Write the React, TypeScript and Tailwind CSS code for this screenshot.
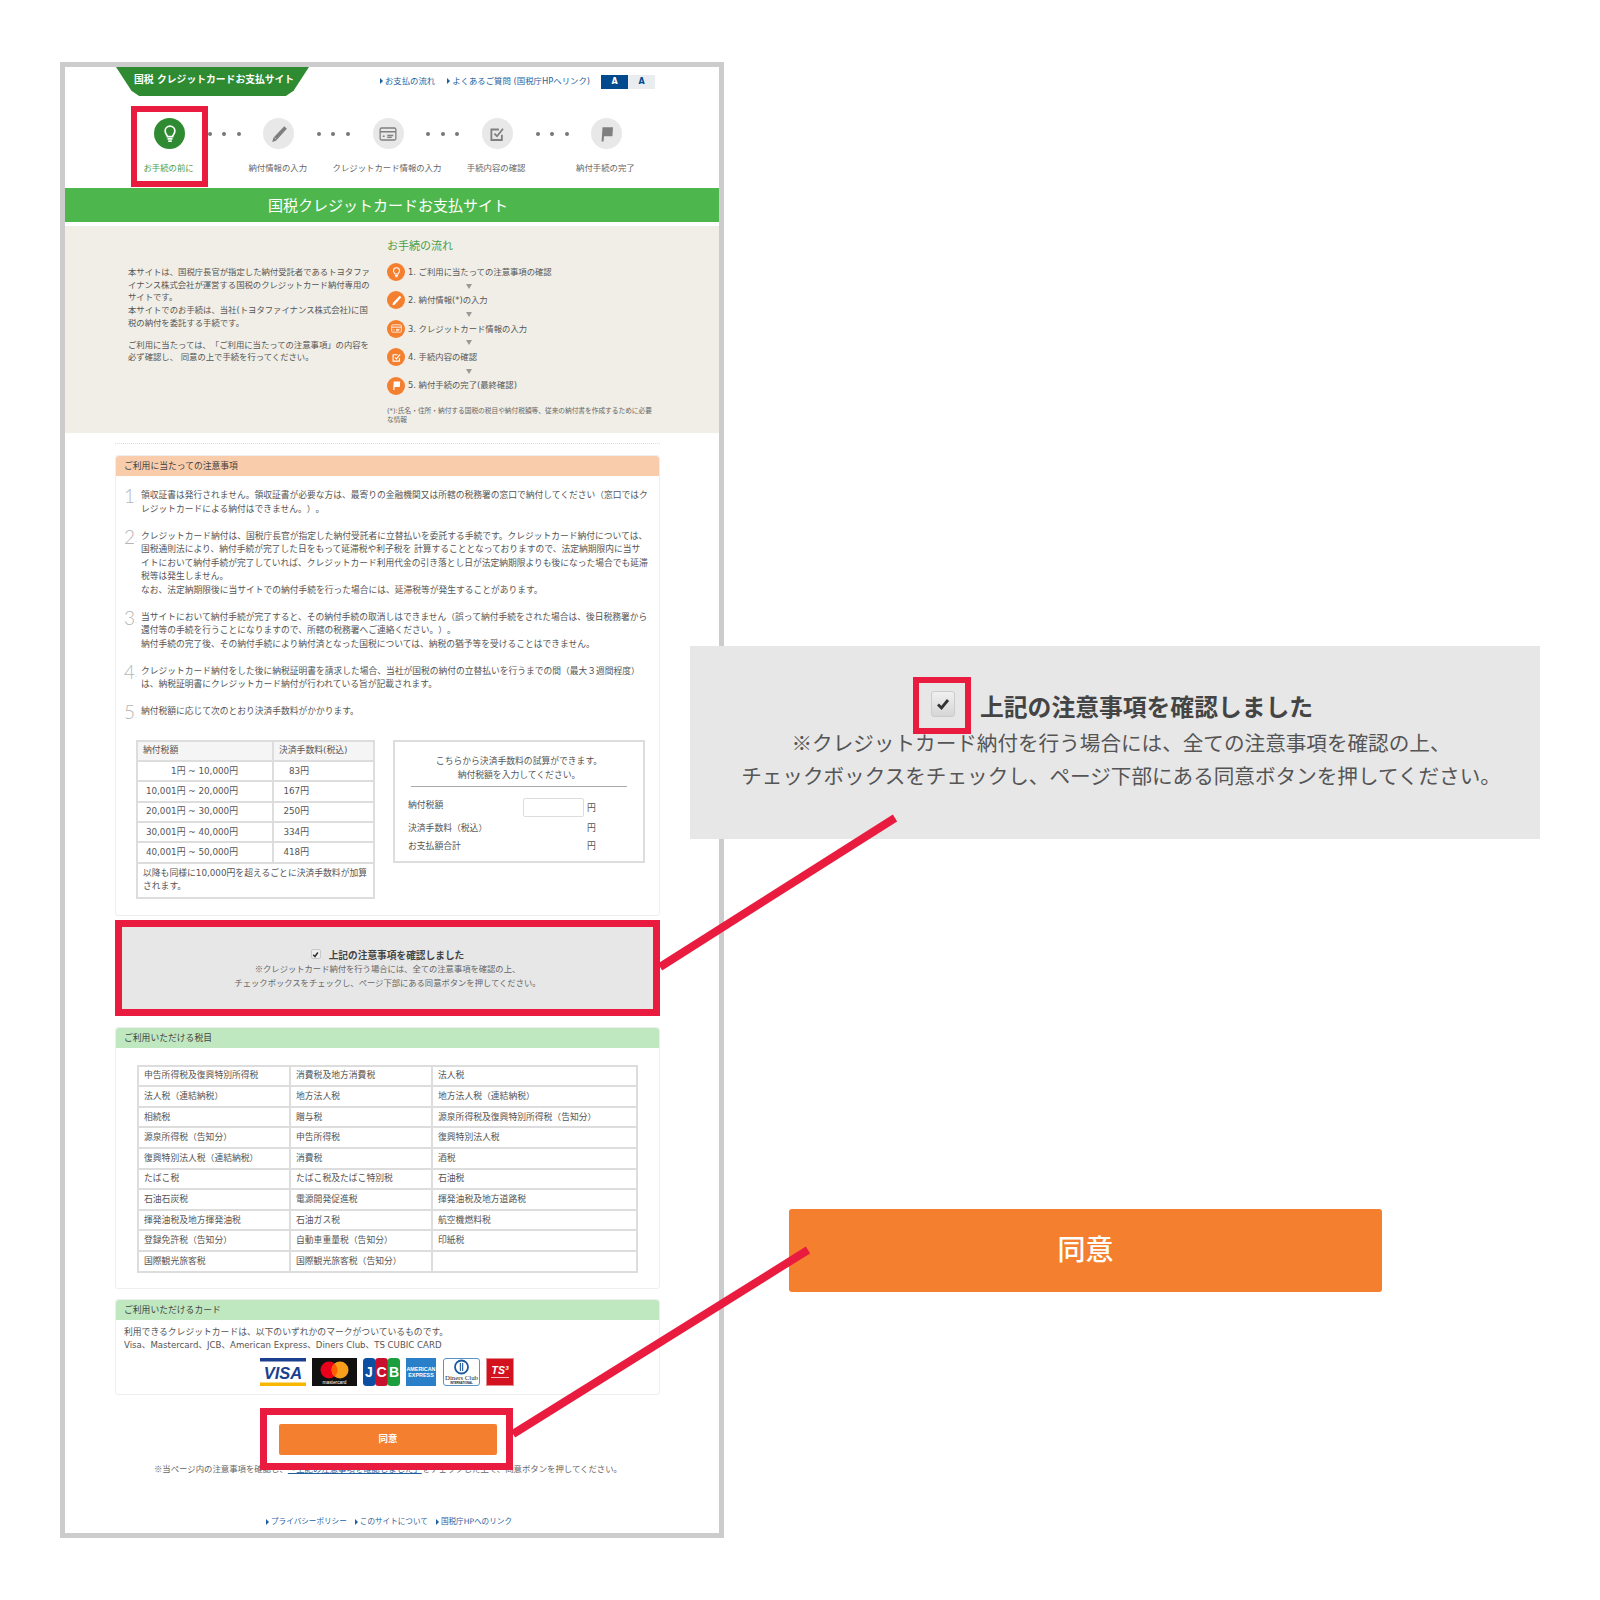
import { ReactNode } from 'react';

const fees = [
  ['1円 ~ 10,000円', '83円'],
  ['10,001円 ~ 20,000円', '167円'],
  ['20,001円 ~ 30,000円', '250円'],
  ['30,001円 ~ 40,000円', '334円'],
  ['40,001円 ~ 50,000円', '418円'],
];

const taxes = [
  ['申告所得税及復興特別所得税', '消費税及地方消費税', '法人税'],
  ['法人税（連結納税）', '地方法人税', '地方法人税（連結納税）'],
  ['相続税', '贈与税', '源泉所得税及復興特別所得税（告知分）'],
  ['源泉所得税（告知分）', '申告所得税', '復興特別法人税'],
  ['復興特別法人税（連結納税）', '消費税', '酒税'],
  ['たばこ税', 'たばこ税及たばこ特別税', '石油税'],
  ['石油石炭税', '電源開発促進税', '揮発油税及地方道路税'],
  ['揮発油税及地方揮発油税', '石油ガス税', '航空機燃料税'],
  ['登録免許税（告知分）', '自動車重量税（告知分）', '印紙税'],
  ['国際観光旅客税', '国際観光旅客税（告知分）', ''],
];

const flow = ['1. ご利用に当たっての注意事項の確認', '2. 納付情報(*)の入力', '3. クレジットカード情報の入力', '4. 手続内容の確認', '5. 納付手続の完了(最終確認)'];

const stepLabels = ['お手続の前に', '納付情報の入力', 'クレジットカード情報の入力', '手続内容の確認', '納付手続の完了'];

function Bulb({ size, color }: { size: number; color: string }) {
  return (
    <svg width={size} height={size} viewBox="0 0 24 24" fill="none" stroke={color} strokeWidth="2.2" strokeLinecap="round">
      <path d="M8.5 15.5c0-2-3-3.5-3-7.5a6.5 6.5 0 0 1 13 0c0 4-3 5.500-3 7.500z" />
      <path d="M9.500 18.500h5M10.500 21.500h3" />
    </svg>
  );
}

function PencilIcon({ size, color }: { size: number; color: string }) {
  return (
    <svg width={size} height={size} viewBox="0 0 24 24" fill={color}>
      <path d="M19 1.500l3.500 3.500L8 21l-5 1.500L4.500 17z" />
      <path d="M5.800 16.500l2.500 2.500" stroke="#e8e8e8" strokeWidth="0.8" />
    </svg>
  );
}

function CardIcon({ size, color }: { size: number; color: string }) {
  return (
    <svg width={size} height={size} viewBox="0 0 24 24" fill="none" stroke={color} strokeWidth="1.700">
      <rect x="1.500" y="4" width="21" height="16" rx="2" />
      <path d="M1.500 9h21" strokeWidth="2" />
      <path d="M5 15h2.500M11 14h8M11 16.500h6" />
    </svg>
  );
}

function CheckIcon({ size, color }: { size: number; color: string }) {
  return (
    <svg width={size} height={size} viewBox="0 0 24 24" fill="none" stroke={color} strokeWidth="2.400">
      <path d="M18.500 13v7h-14V6h10" />
      <path d="M8.500 11.500l3.500 3.500 8-10" />
    </svg>
  );
}

function FlagIcon({ size, color }: { size: number; color: string }) {
  return (
    <svg width={size} height={size} viewBox="0 0 24 24" fill={color}>
      <path d="M6 3h14l-.8 12H8l-.6 7H4.800z" />
    </svg>
  );
}

const icons = [Bulb, PencilIcon, CardIcon, CheckIcon, FlagIcon];

function Section({ title, color, children }: { title: string; color: string; children: ReactNode }) {
  return (
    <div className="mr-[59px] ml-[50px] rounded-[3px] border border-[#eeeeee]">
      <div className={`h-[20px] rounded-t-[3px] pl-2 text-[8.800px] leading-[20px] text-[#444] ${color}`}>{title}</div>
      {children}
    </div>
  );
}

function Note({ n, children }: { n: number; children: ReactNode }) {
  return (
    <li className="flex">
      <span className="flex h-[13.500px] w-[25px] shrink-0 items-end pl-[8px] font-['Lato',sans-serif] text-[19px] leading-[13.500px] font-light text-[#b5b5b5]">
        {n}
        <span className="text-[8px] leading-[8px]">.</span>
      </span>
      <div>{children}</div>
    </li>
  );
}

function NavLink({ children }: { children: ReactNode }) {
  return (
    <span className="flex items-center whitespace-nowrap">
      <span className="mr-[2px] h-0 w-0 border-y-[3px] border-l-[3px] border-y-transparent border-l-[#1f5f9e]" />
      {children}
    </span>
  );
}

// the reference mark needs the CJK face, DejaVu's one is narrow
function Mark() {
  return <span className="font-['Noto_Sans_CJK_JP',sans-serif]">※</span>;
}

function CardLogos() {
  return (
    <div className="mt-[5px] flex justify-center pr-[2px]">
      <svg width="46" height="28" viewBox="0 0 46 28" className="ml-[1px]">
        <rect width="46" height="28" fill="#fff" />
        <rect width="46" height="3.500" fill="#1a3f8f" />
        <rect y="24.500" width="46" height="3.500" fill="#f7b600" />
        <text x="23" y="20.500" textAnchor="middle" fontFamily="Liberation Sans" fontWeight="700" fontStyle="italic" fontSize="16.500" fill="#1a3f8f">VISA</text>
      </svg>
      <svg width="45" height="28" viewBox="0 0 45 28" className="ml-[6px]">
        <rect width="45" height="28" fill="#111" />
        <circle cx="17" cy="12" r="8.500" fill="#eb001b" />
        <circle cx="28" cy="12" r="8.500" fill="#f79e1b" />
        <path d="M22.500 5.500a8.500 8.500 0 0 1 0 13a8.500 8.500 0 0 1 0-13z" fill="#ff5f00" />
        <text x="22.500" y="25.500" textAnchor="middle" fontFamily="Liberation Sans" fontSize="4.800" fill="#fff">mastercard</text>
      </svg>
      <svg width="37" height="28" viewBox="0 0 37 28" className="ml-[6px]">
        <rect x="0" width="12.500" height="28" rx="3.500" fill="#0b4ea2" />
        <rect x="12" width="13" height="28" rx="3.500" fill="#c8102e" />
        <rect x="24.500" width="12.500" height="28" rx="3.500" fill="#1b9e3e" />
        <text x="6" y="19" textAnchor="middle" fontFamily="Liberation Sans" fontWeight="700" fontSize="14" fill="#fff">J</text>
        <text x="18.500" y="19" textAnchor="middle" fontFamily="Liberation Sans" fontWeight="700" fontSize="14" fill="#fff">C</text>
        <text x="31" y="19" textAnchor="middle" fontFamily="Liberation Sans" fontWeight="700" fontSize="14" fill="#fff">B</text>
      </svg>
      <svg width="30" height="28" viewBox="0 0 30 28" className="ml-[6px]">
        <rect width="30" height="28" fill="#2a7fc9" />
        <text x="15" y="12.500" textAnchor="middle" fontFamily="Liberation Sans" fontWeight="700" fontSize="5.400" fill="#fff">AMERICAN</text>
        <text x="15" y="19" textAnchor="middle" fontFamily="Liberation Sans" fontWeight="700" fontSize="5.400" fill="#fff">EXPRESS</text>
      </svg>
      <svg width="37" height="28" viewBox="0 0 37 28" className="ml-[7px]">
        <rect x="0.500" y="0.500" width="36" height="27" rx="2.500" fill="#fff" stroke="#5a93c8" />
        <circle cx="18.500" cy="9" r="6.500" fill="none" stroke="#1c5aa0" strokeWidth="1.800" />
        <rect x="16.800" y="5" width="1.100" height="8" fill="#1c5aa0" />
        <rect x="19.100" y="5" width="1.100" height="8" fill="#1c5aa0" />
        <text x="18.500" y="21.500" textAnchor="middle" fontFamily="Liberation Serif" fontSize="6.800" fill="#222">Diners Club</text>
        <text x="18.500" y="25.500" textAnchor="middle" fontFamily="Liberation Sans" fontWeight="700" fontSize="2.800" fill="#222">INTERNATIONAL</text>
      </svg>
      <svg width="28" height="28" viewBox="0 0 28 28" className="ml-[6px]">
        <rect x="0.500" y="0.500" width="27" height="27" fill="#d4111e" stroke="#e58a8f" />
        <text x="14" y="16" textAnchor="middle" fontFamily="Liberation Sans" fontWeight="700" fontStyle="italic" fontSize="10.500" fill="#fff">TS³</text>
        <rect x="5" y="19" width="18" height="1" fill="#f4b9bc" />
      </svg>
    </div>
  );
}

export default function App() {
  return (
    <div className="relative h-[1600px] w-[1600px] overflow-hidden bg-white pt-[62px] pl-[60px] font-['DejaVu_Sans','Noto_Sans_CJK_JP',sans-serif] text-[#555] [text-spacing-trim:space-all]">
      {/* left: the page itself */}
      <div className="h-[1476px] w-[664px] border-[5px] border-[#cccccc] bg-white">
        <div className="flex h-[29px]">
          <div className="ml-[51px] h-[29px] w-[193px] bg-[#2e8b31] pl-[18px] text-[9.800px] leading-[26px] font-bold text-white [clip-path:polygon(0_0,100%_0,92%_82%,88%_100%,12%_100%,8%_82%)]">
            国税 クレジットカードお支払サイト
          </div>
          <div className="ml-[71px] flex h-[14px] items-center gap-[12px] pt-[13px] text-[8.400px] leading-[14px] text-[#1f5f9e]">
            <NavLink>お支払の流れ</NavLink>
            <NavLink>よくあるご質問 (国税庁HPへリンク)</NavLink>
          </div>
        </div>
        <div className="relative">
          <div className="absolute top-[-21px] left-[536px] flex h-[14px] text-[8px] leading-[14px] font-bold">
            <span className="w-[27px] bg-[#004a8d] text-center text-white">A</span>
            <span className="w-[27px] bg-[#e9edf0] text-center text-[#004a8d]">A</span>
          </div>
        </div>

        <div className="mt-[22px] ml-[89px] flex items-center">
          {icons.map((Icon, i) => (
            <div key={i} className="flex items-center">
              <div className={`flex h-[31px] w-[31px] items-center justify-center rounded-full ${i === 0 ? 'bg-[#2e8b31]' : 'bg-[#e8e8e8]'}`}>
                <Icon size={18} color={i === 0 ? '#ffffff' : '#7f7f7f'} />
              </div>
              {i < 4 && (
                <div className="flex w-[78.300px] justify-center gap-[10.500px]">
                  <span className="h-[4px] w-[4px] rounded-full bg-[#777]" />
                  <span className="h-[4px] w-[4px] rounded-full bg-[#777]" />
                  <span className="h-[4px] w-[4px] rounded-full bg-[#777]" />
                </div>
              )}
            </div>
          ))}
        </div>
        <div className="mt-[13px] ml-[49px] flex text-[8.400px] leading-[12px]">
          {stepLabels.map((label, i) => (
            <div key={label} className={`w-[109.200px] text-center whitespace-nowrap ${i === 0 ? 'text-[#4a9e4a]' : 'text-[#666]'}`}>
              <span className="-mx-[20px] inline-block">{label}</span>
            </div>
          ))}
        </div>

        <div className="mt-[14px] h-[34px] bg-[#4db74d] pr-[8px] text-center text-[15px] leading-[36px] text-white">国税クレジットカードお支払サイト</div>

        <div className="mt-[4px] flex h-[207px] bg-[#f0eee6]">
          <div className="ml-[63px] w-[259px] pt-[40px] text-[8.350px] leading-[12.700px] text-[#555]">
            <p>
              本サイトは、国税庁長官が指定した納付受託者であるトヨタファ
              <br />
              イナンス株式会社が運営する国税のクレジットカード納付専用の
              <br />
              サイトです。
              <br />
              本サイトでのお手続は、当社(トヨタファイナンス株式会社)に国
              <br />
              税の納付を委託する手続です。
            </p>
            <p className="mt-[9px]">
              ご利用に当たっては、「ご利用に当たっての注意事項」の内容を
              <br />
              必ず確認し、 同意の上で手続を行ってください。
            </p>
          </div>
          <div className="w-[270px] pt-[14px]">
            <div className="h-[14px] text-[11px] leading-[14px] text-[#4a9e4a]">お手続の流れ</div>
            <div className="mt-[9px]">
              {flow.map((text, i) => {
                const Icon = icons[i];
                return (
                  <div key={text}>
                    <div className="flex h-[18px] items-center">
                      <div className="flex h-[18px] w-[18px] items-center justify-center rounded-full bg-[#f47f2e]">
                        <Icon size={11} color="#ffffff" />
                      </div>
                      <span className="ml-[3px] text-[8.350px] whitespace-nowrap text-[#555]">{text}</span>
                    </div>
                    {i < 4 && (
                      <div className="flex h-[10.400px] items-center pl-[78.500px]">
                        <span className="h-0 w-0 border-x-[3.500px] border-t-[5px] border-x-transparent border-t-[#999]" />
                      </div>
                    )}
                  </div>
                );
              })}
            </div>
            <p className="mt-[12px] text-[6.700px] leading-[9.500px] whitespace-nowrap text-[#666]">
              (*):氏名・住所・納付する国税の税目や納付税額等、従来の納付書を作成するために必要
              <br />
              な情報
            </p>
          </div>
        </div>

        <div className="mt-[10px] mr-[59px] mb-[11px] ml-[50px] border-t border-dotted border-[#dddddd]" />

        <Section title="ご利用に当たっての注意事項" color="bg-[#f9ccab]">
          <ol className="flex flex-col gap-[13.600px] pt-[13px] text-[8.750px] leading-[13.500px] whitespace-nowrap text-[#555]">
            <Note n={1}>
              領収証書は発行されません。領収証書が必要な方は、最寄りの金融機関又は所轄の税務署の窓口で納付してください（窓口ではク
              <br />
              レジットカードによる納付はできません。）。
            </Note>
            <Note n={2}>
              クレジットカード納付は、国税庁長官が指定した納付受託者に立替払いを委託する手続です。クレジットカード納付については、
              <br />
              国税通則法により、納付手続が完了した日をもって延滞税や利子税を 計算することとなっておりますので、法定納期限内に当サ
              <br />
              イトにおいて納付手続が完了していれば、クレジットカード利用代金の引き落とし日が法定納期限よりも後になった場合でも延滞
              <br />
              税等は発生しません。
              <br />
              なお、法定納期限後に当サイトでの納付手続を行った場合には、延滞税等が発生することがあります。
            </Note>
            <Note n={3}>
              当サイトにおいて納付手続が完了すると、その納付手続の取消しはできません（誤って納付手続をされた場合は、後日税務署から
              <br />
              還付等の手続を行うことになりますので、所轄の税務署へご連絡ください。）。
              <br />
              納付手続の完了後、その納付手続により納付済となった国税については、納税の猶予等を受けることはできません。
            </Note>
            <Note n={4}>
              クレジットカード納付をした後に納税証明書を請求した場合、当社が国税の納付の立替払いを行うまでの間（最大３週間程度）
              <br />
              は、納税証明書にクレジットカード納付が行われている旨が記載されます。
            </Note>
            <Note n={5}>納付税額に応じて次のとおり決済手数料がかかります。</Note>
          </ol>

          <div className="mt-[21px] ml-[20px] flex items-start pb-[16px] text-[8.800px] text-[#555]">
            <table className="w-[239px] table-fixed border-collapse border-2 border-[#dddddd]">
              <colgroup>
                <col className="w-[136px]" />
                <col />
              </colgroup>
              <thead>
                <tr className="h-[20.300px] bg-[#f5f5f5] text-left">
                  <th className="border-2 border-[#dddddd] pl-[5px] font-normal">納付税額</th>
                  <th className="border-2 border-[#dddddd] pl-[5px] font-normal">決済手数料(税込)</th>
                </tr>
              </thead>
              <tbody>
                {fees.map(([range, fee]) => (
                  <tr key={fee} className="h-[20.300px]">
                    <td className="border-2 border-[#dddddd] pr-[34px] text-right whitespace-nowrap">{range}</td>
                    <td className="border-2 border-[#dddddd] pr-[64px] text-right">{fee}</td>
                  </tr>
                ))}
                <tr className="h-[35px]">
                  <td colSpan={2} className="border-2 border-[#dddddd] pl-[5px] leading-[13.500px] whitespace-nowrap">
                    以降も同様に10,000円を超えるごとに決済手数料が加算
                    <br />
                    されます。
                  </td>
                </tr>
              </tbody>
            </table>
            <div className="ml-[18px] h-[123px] w-[252px] border-2 border-[#dddddd] pt-[12px] text-[8.800px] leading-[14px]">
              <p className="text-center whitespace-nowrap">
                こちらから決済手数料の試算ができます。
                <br />
                納付税額を入力してください。
              </p>
              <div className="mx-[16px] mt-[4px] border-t border-[#aaaaaa]" />
              <div className="mt-[11px] flex h-[19px] pl-[13px]">
                <span className="w-[115px] leading-[14px]">納付税額</span>
                <span className="h-[19px] w-[61px] rounded-[2px] border border-[#dddddd] bg-white" />
                <span className="ml-[3px] pt-[3px]">円</span>
              </div>
              <div className="mt-[4px] flex pl-[13px]">
                <span className="w-[179px]">決済手数料（税込）</span>
                <span>円</span>
              </div>
              <div className="mt-[4px] flex pl-[13px]">
                <span className="w-[179px]">お支払額合計</span>
                <span>円</span>
              </div>
            </div>
          </div>
        </Section>

        <div className="mt-[4px] mr-[59px] ml-[50px] h-[96px] border-[7px] border-[#e91c3f] bg-[#e7e7e7] pt-[22px] text-center">
          <div className="flex h-[14px] items-center justify-center">
            <span className="mb-[3px] flex h-[10px] w-[10px] items-center justify-center rounded-[2px] border border-[#c8c8c8] bg-[#eeeeee]">
              <svg width="7" height="7" viewBox="0 0 12 12" fill="none" stroke="#333" strokeWidth="2.600">
                <path d="M2 6.500l3 3L10 2.500" />
              </svg>
            </span>
            <span className="ml-[8px] text-[9.700px] leading-[14px] font-bold text-[#444]">上記の注意事項を確認しました</span>
          </div>
          <p className="-mt-[2px] text-[8.300px] leading-[14px] whitespace-nowrap text-[#666]">
            <Mark />
            クレジットカード納付を行う場合には、全ての注意事項を確認の上、
            <br />
            チェックボックスをチェックし、ページ下部にある同意ボタンを押してください。
          </p>
        </div>

        <div className="mt-[11px]">
          <Section title="ご利用いただける税目" color="bg-[#c0e8c0]">
            <div className="px-[21px] pt-[17px] pb-[15px]">
              <table className="w-[501px] table-fixed border-collapse border-2 border-[#dddddd] text-[8.800px] text-[#555]">
                <colgroup>
                  <col className="w-[152px]" />
                  <col className="w-[142px]" />
                  <col />
                </colgroup>
                <tbody>
                  {taxes.map((row) => (
                    <tr key={row[0]} className="h-[20.600px]">
                      {row.map((cell, i) => (
                        <td key={i} className="border-2 border-[#dddddd] pl-[5px] whitespace-nowrap">
                          {cell}
                        </td>
                      ))}
                    </tr>
                  ))}
                </tbody>
              </table>
            </div>
          </Section>
        </div>

        <div className="mt-[10px]">
          <Section title="ご利用いただけるカード" color="bg-[#c0e8c0]">
            <div className="h-[74px] pt-[6px]">
              <p className="pl-[8px] text-[8.800px] leading-[13.500px] whitespace-nowrap text-[#555]">
                利用できるクレジットカードは、以下のいずれかのマークがついているものです。
                <br />
                <span className="text-[8.600px]">Visa、Mastercard、JCB、American Express、Diners Club、TS CUBIC CARD</span>
              </p>
              <CardLogos />
            </div>
          </Section>
        </div>

        <button className="mt-[29px] ml-[214px] block h-[31px] w-[218px] rounded-[2px] bg-[#f47f2e] text-[9.500px] font-bold text-white">同意</button>

        <p className="mt-[7px] pr-[8px] text-center text-[8.400px] leading-[12px] whitespace-nowrap text-[#666]">
          <Mark />
          当ページ内の注意事項を確認し、<span className="text-[#1f5f9e] underline">「上記の注意事項を確認しました」</span>をチェックした上で、同意ボタンを押してください。
        </p>

        <div className="mt-[41px] flex justify-center gap-[8px] pl-[2px] pr-[8px] text-[7.600px] leading-[12px] text-[#1f5f9e]">
          <NavLink>プライバシーポリシー</NavLink>
          <NavLink>このサイトについて</NavLink>
          <NavLink>国税庁HPへのリンク</NavLink>
        </div>
      </div>

      {/* highlight frames and callouts that sit over the page */}
      <div className="absolute top-[106px] left-[131px] h-[81px] w-[77px] border-[6px] border-[#e91c3f]" />
      <div className="absolute top-[1408px] left-[260px] h-[62px] w-[253px] border-[7px] border-[#e91c3f]" />

      <div className="absolute top-[646px] left-[690px] h-[193px] w-[850px] bg-[#e7e7e7] pt-[42px] text-center">
        <div className="flex h-[40px] items-center pl-[241px]">
          <span className="relative mb-[8px] flex h-[26px] w-[24px] items-center justify-center rounded-[3px] border border-[#cccccc] bg-gradient-to-b from-[#f0f0f0] to-[#d6d6d6]">
            <svg width="16" height="16" viewBox="0 0 16 16" fill="none" stroke="#333" strokeWidth="2.800">
              <path d="M3 8.500l3.500 3.500L13 4" />
            </svg>
            <span className="absolute top-[-15px] left-[-19px] h-[57px] w-[58px] border-[6px] border-[#e91c3f]" />
          </span>
          <span className="ml-[25px] text-[23.800px] leading-[40px] font-bold whitespace-nowrap text-[#444]">上記の注意事項を確認しました</span>
        </div>
        <p className="-mt-[2px] pl-[12px] text-[20.600px] leading-[33px] whitespace-nowrap text-[#555]">
          <Mark />
          クレジットカード納付を行う場合には、全ての注意事項を確認の上、
          <br />
          チェックボックスをチェックし、ページ下部にある同意ボタンを押してください。
        </p>
      </div>

      <div className="absolute top-[1209px] left-[789px] flex h-[83px] w-[593px] items-center justify-center rounded-[3px] bg-[#f47f2e] text-[28px] font-medium text-white">同意</div>

      <svg className="pointer-events-none absolute top-0 left-0" width="1600" height="1600" fill="none" stroke="#e91c3f" strokeWidth="8">
        <path d="M660 967L895 818" />
        <path d="M513 1434L808 1250" />
      </svg>
    </div>
  );
}
